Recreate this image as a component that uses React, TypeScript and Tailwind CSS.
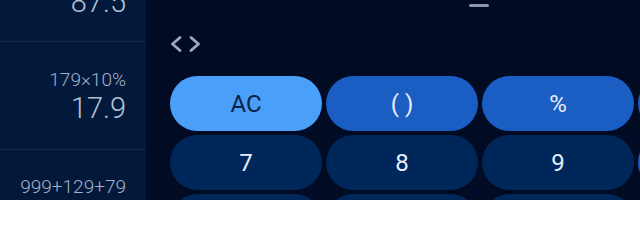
import React from "react";

const rows: { label: string; kind: "ac" | "op" | "num" }[][] = [
  [
    { label: "AC", kind: "ac" },
    { label: "( )", kind: "op" },
    { label: "%", kind: "op" },
    { label: "÷", kind: "op" },
  ],
  [
    { label: "7", kind: "num" },
    { label: "8", kind: "num" },
    { label: "9", kind: "num" },
    { label: "×", kind: "op" },
  ],
  [
    { label: "4", kind: "num" },
    { label: "5", kind: "num" },
    { label: "6", kind: "num" },
    { label: "−", kind: "op" },
  ],
];

const kindClass = {
  ac: "bg-[#4aa0f8] text-[#0b2149]",
  op: "bg-[#1a5dc3] text-[#e8eef9]",
  num: "bg-[#00275a] text-[#e8eef9]",
};

export default function App() {
  return (
    <div
      className="w-[640px] h-[200px] overflow-hidden flex bg-[#010c24]"
      style={{ fontFamily: "Roboto, 'Noto Sans', sans-serif" }}
    >
      {/* History panel */}
      <div className="w-[146px] shrink-0 h-full bg-[#03193b] flex flex-col text-right text-[#a3b2c9]">
        <div className="h-[42px] shrink-0 flex flex-col justify-end pb-[24px] pr-[20px] border-b border-[#0f2b50]">
          <div className="text-[29px] leading-[29px] font-light text-[#b4c1d4]">87.5</div>
        </div>
        <div className="shrink-0 flex flex-col pt-[28px] pb-[26px] pr-[20px] border-b border-[#0f2b50]">
          <div className="text-[19px] leading-[19px] font-light">179×10%</div>
          <div className="mt-[5px] text-[29px] leading-[29px] font-light text-[#b4c1d4]">17.9</div>
        </div>
        <div className="shrink-0 flex flex-col pt-[27px] pr-[20px]">
          <div className="text-[19px] leading-[19px] font-light">999+129+79</div>
        </div>
      </div>

      {/* Keypad panel */}
      <div className="w-[666px] shrink-0 h-full flex flex-col pt-[4px] pl-[24px]">
        <div className="shrink-0 h-[3px] w-[20px] rounded-full bg-[#8a97b3] self-center -ml-[24px]" />
        <div className="shrink-0 mt-[28px] h-[18px] flex items-center">
          <svg width="33" height="18" viewBox="0 0 33 18" fill="none" className="-ml-[1px]">
            <path d="M11 2.5 L3.5 9 L11 15.5" stroke="#9ea9c1" strokeWidth="2.8" strokeLinecap="round" strokeLinejoin="round" />
            <path d="M22 2.5 L29.5 9 L22 15.5" stroke="#9ea9c1" strokeWidth="2.8" strokeLinecap="round" strokeLinejoin="round" />
          </svg>
        </div>
        <div className="shrink-0 mt-[23px] grid grid-cols-[152px_152px_152px_152px] auto-rows-[55px] gap-[4px]">
          {rows.flat().map((b, i) => (
            <div
              key={i}
              className={`rounded-full flex items-center justify-center text-[24px] ${kindClass[b.kind]}`}
            >
              {b.label}
            </div>
          ))}
        </div>
      </div>
    </div>
  );
}
